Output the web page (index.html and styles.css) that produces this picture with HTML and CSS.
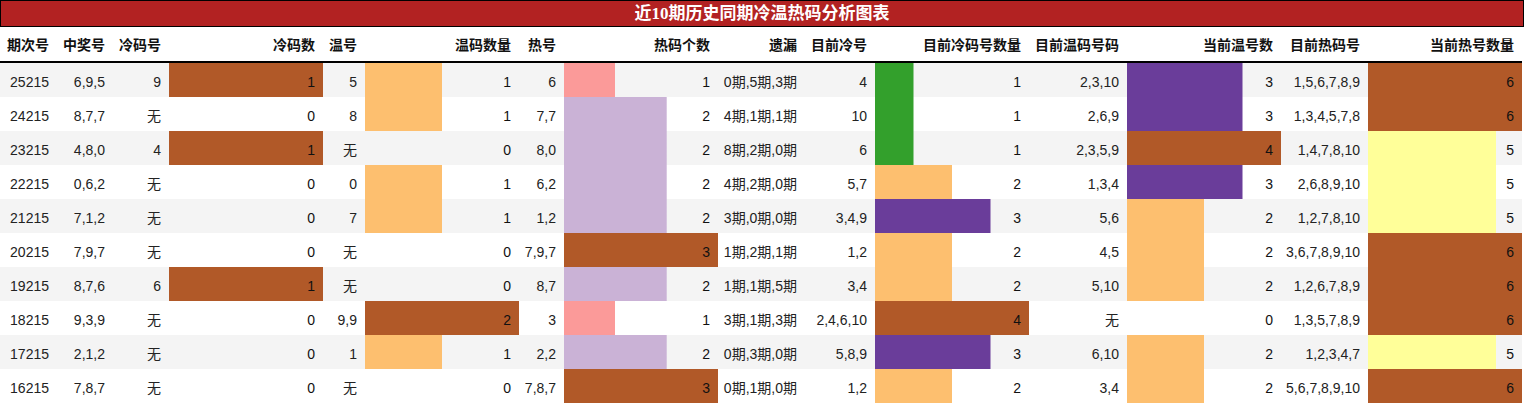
FILE: index.html
```html
<!DOCTYPE html>
<html lang="zh-CN">
<head>
<meta charset="utf-8">
<title>近10期历史同期冷温热码分析图表</title>
<link rel="stylesheet" href="styles.css">
</head>
<body>
<div class="chart">
  <div class="title">近10期历史同期冷温热码分析图表</div>
  <table class="grid">
    <colgroup>
      <col class="w57"><col class="w56"><col class="w56"><col class="wbar"><col class="w42"><col class="wbar"><col class="w45"><col class="wbar"><col class="w87"><col class="w70"><col class="wbar"><col class="w98"><col class="wbar"><col class="w87"><col class="wbar">
    </colgroup>
    <thead>
      <tr>
        <th>期次号</th><th>中奖号</th><th>冷码号</th><th>冷码数</th><th>温号</th><th>温码数量</th><th>热号</th><th>热码个数</th><th>遗漏</th><th>目前冷号</th><th>目前冷码号数量</th><th>目前温码号码</th><th>当前温号数</th><th>目前热码号</th><th>当前热号数量</th>
      </tr>
    </thead>
    <tbody>
      <tr>
        <td>25215</td><td>6,9,5</td><td>9</td><td class="bar c-brown" style="--w:100%">1</td><td>5</td><td class="bar c-orange" style="--w:50%">1</td><td>6</td><td class="bar c-pink" style="--w:33.3%">1</td><td>0期,5期,3期</td><td>4</td><td class="bar c-green" style="--w:25%">1</td><td>2,3,10</td><td class="bar c-purple" style="--w:75%">3</td><td>1,5,6,7,8,9</td><td class="bar c-brown" style="--w:100%">6</td>
      </tr>
      <tr>
        <td>24215</td><td>8,7,7</td><td>无</td><td class="bar" style="--w:0%">0</td><td>8</td><td class="bar c-orange" style="--w:50%">1</td><td>7,7</td><td class="bar c-lav" style="--w:66.7%">2</td><td>4期,1期,1期</td><td>10</td><td class="bar c-green" style="--w:25%">1</td><td>2,6,9</td><td class="bar c-purple" style="--w:75%">3</td><td>1,3,4,5,7,8</td><td class="bar c-brown" style="--w:100%">6</td>
      </tr>
      <tr>
        <td>23215</td><td>4,8,0</td><td>4</td><td class="bar c-brown" style="--w:100%">1</td><td>无</td><td class="bar" style="--w:0%">0</td><td>8,0</td><td class="bar c-lav" style="--w:66.7%">2</td><td>8期,2期,0期</td><td>6</td><td class="bar c-green" style="--w:25%">1</td><td>2,3,5,9</td><td class="bar c-brown" style="--w:100%">4</td><td>1,4,7,8,10</td><td class="bar c-yellow" style="--w:83.3%">5</td>
      </tr>
      <tr>
        <td>22215</td><td>0,6,2</td><td>无</td><td class="bar" style="--w:0%">0</td><td>0</td><td class="bar c-orange" style="--w:50%">1</td><td>6,2</td><td class="bar c-lav" style="--w:66.7%">2</td><td>4期,2期,0期</td><td>5,7</td><td class="bar c-orange" style="--w:50%">2</td><td>1,3,4</td><td class="bar c-purple" style="--w:75%">3</td><td>2,6,8,9,10</td><td class="bar c-yellow" style="--w:83.3%">5</td>
      </tr>
      <tr>
        <td>21215</td><td>7,1,2</td><td>无</td><td class="bar" style="--w:0%">0</td><td>7</td><td class="bar c-orange" style="--w:50%">1</td><td>1,2</td><td class="bar c-lav" style="--w:66.7%">2</td><td>3期,0期,0期</td><td>3,4,9</td><td class="bar c-purple" style="--w:75%">3</td><td>5,6</td><td class="bar c-orange" style="--w:50%">2</td><td>1,2,7,8,10</td><td class="bar c-yellow" style="--w:83.3%">5</td>
      </tr>
      <tr>
        <td>20215</td><td>7,9,7</td><td>无</td><td class="bar" style="--w:0%">0</td><td>无</td><td class="bar" style="--w:0%">0</td><td>7,9,7</td><td class="bar c-brown" style="--w:100%">3</td><td>1期,2期,1期</td><td>1,2</td><td class="bar c-orange" style="--w:50%">2</td><td>4,5</td><td class="bar c-orange" style="--w:50%">2</td><td>3,6,7,8,9,10</td><td class="bar c-brown" style="--w:100%">6</td>
      </tr>
      <tr>
        <td>19215</td><td>8,7,6</td><td>6</td><td class="bar c-brown" style="--w:100%">1</td><td>无</td><td class="bar" style="--w:0%">0</td><td>8,7</td><td class="bar c-lav" style="--w:66.7%">2</td><td>1期,1期,5期</td><td>3,4</td><td class="bar c-orange" style="--w:50%">2</td><td>5,10</td><td class="bar c-orange" style="--w:50%">2</td><td>1,2,6,7,8,9</td><td class="bar c-brown" style="--w:100%">6</td>
      </tr>
      <tr>
        <td>18215</td><td>9,3,9</td><td>无</td><td class="bar" style="--w:0%">0</td><td>9,9</td><td class="bar c-brown" style="--w:100%">2</td><td>3</td><td class="bar c-pink" style="--w:33.3%">1</td><td>3期,1期,3期</td><td>2,4,6,10</td><td class="bar c-brown" style="--w:100%">4</td><td>无</td><td class="bar" style="--w:0%">0</td><td>1,3,5,7,8,9</td><td class="bar c-brown" style="--w:100%">6</td>
      </tr>
      <tr>
        <td>17215</td><td>2,1,2</td><td>无</td><td class="bar" style="--w:0%">0</td><td>1</td><td class="bar c-orange" style="--w:50%">1</td><td>2,2</td><td class="bar c-lav" style="--w:66.7%">2</td><td>0期,3期,0期</td><td>5,8,9</td><td class="bar c-purple" style="--w:75%">3</td><td>6,10</td><td class="bar c-orange" style="--w:50%">2</td><td>1,2,3,4,7</td><td class="bar c-yellow" style="--w:83.3%">5</td>
      </tr>
      <tr>
        <td>16215</td><td>7,8,7</td><td>无</td><td class="bar" style="--w:0%">0</td><td>无</td><td class="bar" style="--w:0%">0</td><td>7,8,7</td><td class="bar c-brown" style="--w:100%">3</td><td>0期,1期,0期</td><td>1,2</td><td class="bar c-orange" style="--w:50%">2</td><td>3,4</td><td class="bar c-orange" style="--w:50%">2</td><td>5,6,7,8,9,10</td><td class="bar c-brown" style="--w:100%">6</td>
      </tr>
    </tbody>
  </table>
</div>
</body>
</html>
```

FILE: styles.css
```css
html, body {
  margin: 0;
  padding: 0;
  background: #ffffff;
}

.chart {
  width: 1524px;
  font-family: "Liberation Sans", "Noto Sans CJK SC", sans-serif;
  font-size: 14px;
  color: #222222;
}

.title {
  box-sizing: border-box;
  height: 27px;
  line-height: 25px;
  border: 1px solid #000000;
  background: #b22222;
  color: #ffffff;
  text-align: center;
  font-family: "Liberation Serif", "Noto Sans CJK SC", serif;
  font-size: 17px;
  font-weight: bold;
}

.grid {
  width: 1522px;
  table-layout: fixed;
  border-collapse: separate;
  border-spacing: 0;
}

.w57 { width: 57px; }
.w56 { width: 56px; }
.w42 { width: 42px; }
.w45 { width: 45px; }
.w70 { width: 70px; }
.w87 { width: 87px; }
.w98 { width: 98px; }
.wbar { width: 154px; }

.grid th,
.grid td {
  box-sizing: border-box;
  padding: 0 8px 0 0;
  text-align: right;
  white-space: nowrap;
  vertical-align: middle;
  line-height: 20px;
}

.grid th {
  height: 36px;
  border-bottom: 2px solid #000000;
  font-weight: bold;
  color: #111111;
  padding-top: 1px;
}

.grid td {
  height: 34px;
  padding-top: 3px;
}

.grid tbody tr:nth-child(odd) {
  background: #f4f4f4;
}

.grid tbody tr:nth-child(even) {
  background: #ffffff;
}

.bar {
  --c: transparent;
  color: #111111;
}

.grid td.bar {
  background-image: linear-gradient(var(--c), var(--c));
  background-repeat: no-repeat;
  background-size: var(--w) 100%;
  background-position: left top;
}

.bar.c-brown { --c: #b15928; }
.bar.c-orange { --c: #fdbf6f; }
.bar.c-pink { --c: #fb9a99; }
.bar.c-lav { --c: #cab2d6; }
.bar.c-green { --c: #33a02c; }
.bar.c-purple { --c: #6a3d9a; }
.bar.c-yellow { --c: #ffff99; }
```
